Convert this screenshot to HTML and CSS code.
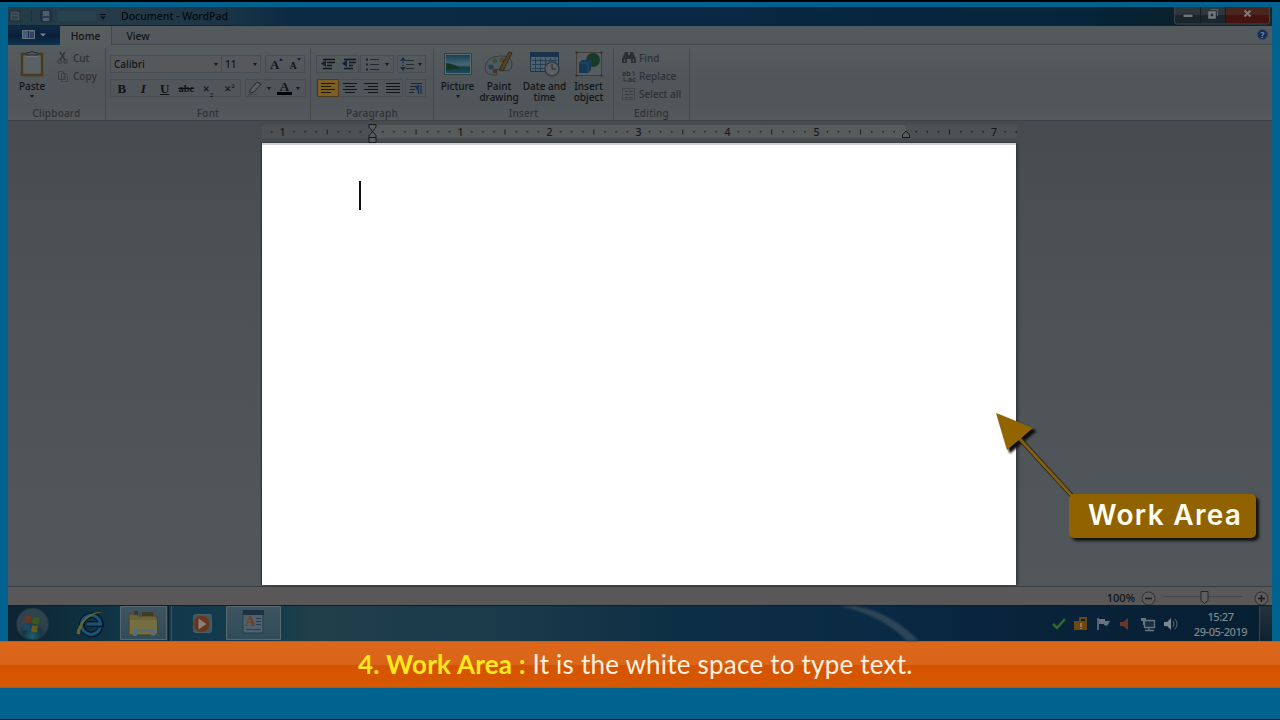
FILE: index.html
```
<!DOCTYPE html>
<html lang="en">
<head>
  <meta charset="UTF-8">
  <title>Document - WordPad</title>
  <link rel="stylesheet" href="styles.css">
</head>
<body>
<div class="window">
  <div class="titlebar">
    <svg class="quick" width="112" height="18" viewBox="8 7 112 18">
      <rect x="10" y="11" width="10" height="10" fill="#43525b" stroke="#1d2b33"/>
      <path d="M12 14h6M12 17h6M12 19h5" stroke="#23333c"/>
      <path d="M31.500 10v12" stroke="#1d303b"/>
      <path d="M41 11h10v10h-10z" fill="#2c3950" stroke="#18263a"/>
      <path d="M43 11h6v5h-6zM43 18h6v3h-6z" fill="#525e68"/>
      <path d="M58 11h38v10h-38z" fill="#344a57" opacity=".4"/>
      <path d="M100 14.500h6" stroke="#0a1016" stroke-width="1"/>
      <path d="M100 16.500h6l-3 3z" fill="#0a1016"/>
    </svg>
    <span class="title">Document - WordPad</span>
    <div class="controls">
      <svg width="97" height="18" viewBox="0 0 97 18">
        <path d="M.5 0v15q0 2 2 2h91q2 0 2-2V0" fill="#1b252c" stroke="#3c464c"/>
        <path d="M1 0h94v8H1z" fill="#2d373d"/>
        <path d="M52 0h43v14q0 2-2 2H52z" fill="#451410"/>
        <path d="M52 0h43v8H52z" fill="#4a241f"/>
        <path d="M26.500 0v16M51.500 0v16" stroke="#121c22"/>
        <path d="M9 7h10v3.500H9z" fill="#70777b" stroke="#1a2329"/>
        <path d="M35.500 5.500h5v5h-5z" fill="none" stroke="#747b7f" stroke-width="2.500"/>
        <path d="M37 2.500h6.500V9" fill="none" stroke="#596268"/>
        <path d="M70.500 3.500l6 6M76.500 3.500l-6 6" stroke="#7f7b79" stroke-width="2"/>
      </svg>
    </div>
  </div>

  <div class="tabs">
    <div class="file-tab">
      <svg width="26" height="10" viewBox="0 0 26 10">
        <path d="M.5.5h12v8h-12z" fill="#465d75" stroke="#66747f"/>
        <path d="M6.500 1v7M8 3h4M8 5h4M8 7h4" stroke="#172b48"/>
        <path d="M18 3.500h6l-3 3z" fill="#75828f"/>
      </svg>
    </div>
    <div class="tab tab-active">Home</div>
    <div class="tab">View</div>
    <div class="help">?</div>
  </div>

  <div class="ribbon">
    <div class="group clipboard">
      <div class="group-body">
        <div class="big paste">
          <svg width="26" height="28" viewBox="0 0 26 28">
            <path d="M3 4h20v21H3z" fill="#5a6063" stroke="#483a1c" stroke-width="2.400"/>
            <path d="M8 5V2.500h3Q13 0 15 2.500h3V5z" fill="#50575b" stroke="#2b3236"/>
            <path d="M6 6.500h14" stroke="#6c7275"/>
          </svg>
          <span>Paste</span><i class="arrow"></i>
        </div>
        <div class="small-list off">
          <div><svg width="14" height="14" viewBox="0 0 14 14"><path d="M4 1l5 8M9 1L4 9" stroke="#303539" fill="none" stroke-width="1.500"/><circle cx="3.500" cy="10.500" r="1.800" stroke="#303539" fill="none"/><circle cx="9.500" cy="10.500" r="1.800" stroke="#303539" fill="none"/></svg>Cut</div>
          <div><svg width="14" height="14" viewBox="0 0 14 14"><path d="M2.500 2.500h4l2 2v6h-6zM5.500 4.500h4l2 2v6h-6z" stroke="#3a4044" fill="#52585b"/><path d="M7 8h3M7 10h3" stroke="#3a4044"/></svg>Copy</div>
        </div>
      </div>
      <div class="group-name">Clipboard</div>
    </div>

    <div class="group font">
      <div class="group-body rows">
        <div class="row">
          <div class="combo family">Calibri<i class="arrow"></i></div>
          <div class="combo size">11<i class="arrow"></i></div>
          <div class="box grow"><b class="serif">A</b><i class="arrow up"></i><b class="serif smaller">A</b><i class="arrow up down"></i></div>
        </div>
        <div class="row">
          <div class="box styles"><b>B</b><b class="italic">I</b><b class="under">U</b><b class="strike">abc</b><b>×<sub>2</sub></b><b>×<sup>2</sup></b></div>
          <div class="box colors">
            <svg width="16" height="16" viewBox="0 0 16 16"><path d="M3 10l7-8 4 2-7 8-4 1z" fill="#5a6063" stroke="#22282c"/><path d="M1 14.500h9" stroke="#3f464a"/></svg>
            <i class="arrow"></i><b class="font-color">A</b><i class="arrow"></i>
          </div>
        </div>
      </div>
      <div class="group-name">Font</div>
    </div>

    <div class="group paragraph">
      <div class="group-body rows">
        <div class="row">
          <div class="box pair">
            <svg width="16" height="14" viewBox="0 0 16 14"><path d="M3 2.500h12M7 5.500h8M7 8.500h5M3 11.500h9" stroke="#11171b" stroke-width="1.500"/><path d="M6 3v7L1 6.500z" fill="#0c2544"/></svg>
            <svg width="16" height="14" viewBox="0 0 16 14"><path d="M3 2.500h12M8 5.500h7M8 8.500h4M3 11.500h9" stroke="#11171b" stroke-width="1.500"/><path d="M6 3v7L1 6.500z" fill="#0c2544"/></svg>
          </div>
          <div class="box list">
            <svg width="15" height="14" viewBox="0 0 15 14"><path d="M5 2.500h9M5 7.500h9M5 12.500h9" stroke="#23292d"/><path d="M1 1.500h2v2H1zM1 6.500h2v2H1zM1 11.500h2v2H1z" fill="#12243d"/></svg>
            <i class="arrow"></i>
          </div>
          <div class="box spacing">
            <svg width="15" height="14" viewBox="0 0 15 14"><path d="M6 3.500h8M6 7.500h8M6 11.500h8" stroke="#23292d"/><path d="M3 0l3 4H0zM3 14l3-4H0zM2 5h2v1H2zM2 8h2v1H2z" fill="#132e4d"/></svg>
            <i class="arrow"></i>
          </div>
        </div>
        <div class="row">
          <div class="box aligns">
            <span class="chosen"><svg width="14" height="12" viewBox="0 0 14 12"><path d="M0 1.500h14M0 4.500h10M0 7.500h14M0 10.500h10" stroke="#20180a"/></svg></span>
            <span><svg width="14" height="12" viewBox="0 0 14 12"><path d="M0 1.500h14M2 4.500h10M0 7.500h14M2 10.500h10" stroke="#101518"/></svg></span>
            <span><svg width="14" height="12" viewBox="0 0 14 12"><path d="M0 1.500h14M4 4.500h10M0 7.500h14M4 10.500h10" stroke="#101518"/></svg></span>
            <span><svg width="14" height="12" viewBox="0 0 14 12"><path d="M0 1.500h14M0 4.500h14M0 7.500h14M0 10.500h14" stroke="#101518"/></svg></span>
          </div>
          <div class="box dialog">
            <svg width="14" height="13" viewBox="0 0 14 13"><path d="M2 1.500h11M1 4.500h6M1 7.500h5M0 10.500h5" stroke="#1c252c"/><path d="M9.500 3v9M12 3v9" stroke="#173253" stroke-width="1.300"/><path d="M10 3v5Q6.500 8 6.500 5.500T10 3z" fill="#173253"/></svg>
          </div>
        </div>
      </div>
      <div class="group-name">Paragraph</div>
    </div>

    <div class="group insert">
      <div class="group-body">
        <div class="big picture">
          <svg width="30" height="28" viewBox="0 0 30 28">
            <defs><linearGradient id="sky" x2="0" y2="1"><stop offset="0" stop-color="#173f5a"/><stop offset=".55" stop-color="#4a6870"/><stop offset=".7" stop-color="#173b3b"/><stop offset="1" stop-color="#1c4a5c"/></linearGradient></defs>
            <path d="M1.500 3.500h27v21h-27z" fill="#5a6a6d" stroke="#2f4246"/>
            <path d="M3 5h24v18H3z" fill="url(#sky)"/>
            <path d="M3 13q9 1 14 5L3 20z" fill="#153322"/>
          </svg>
          <span>Picture</span><i class="arrow"></i>
        </div>
        <div class="big paint">
          <svg width="30" height="28" viewBox="0 0 30 28">
            <path d="M1 18Q2 7 15 6t13 8-9 6-6 5Q2 26 1 18z" fill="#50595c" stroke="#343e41"/>
            <circle cx="7" cy="17" r="2.500" fill="#263e4d"/><circle cx="11" cy="11" r="2.400" fill="#345036"/><circle cx="18" cy="10" r="2.500" fill="#534626"/><circle cx="11" cy="21" r="2.300" fill="#483026"/>
            <path d="M15 20L25 2l3 1-9 18z" fill="#54422b" stroke="#33291b"/>
          </svg>
          <span>Paint<br>drawing</span>
        </div>
        <div class="big date">
          <svg width="32" height="28" viewBox="0 0 32 28">
            <path d="M1.500 2.500h28v19h-28z" fill="#4e606c" stroke="#20323f"/><path d="M1 2h29v5H1z" fill="#1a324a"/>
            <path d="M3 10.500h25M3 14.500h25M3 18.500h25M6.500 8v13M11.500 8v13M16.500 8v13M21.500 8v13M26 8v6" stroke="#263f54"/>
            <circle cx="23" cy="19" r="7" fill="#5a6063" stroke="#343c40" stroke-width="1.500"/><path d="M23 14v5h4" fill="none" stroke="#252c30"/>
          </svg>
          <span>Date and<br>time</span>
        </div>
        <div class="big object">
          <svg width="30" height="28" viewBox="0 0 30 28">
            <path d="M2.500 2.500h25v23h-25z" fill="#565d60" stroke="#453c37"/><circle cx="19" cy="10" r="7" fill="#173b26"/>
            <path d="M5 13l3-3h9v10l-3 3H5z" fill="#173855"/><path d="M5 13h9v10M14 13l3-3" fill="none" stroke="#264a66"/>
            <path d="M1.500 1.500h2v2h-2zM26.500 1.500h2v2h-2zM1.500 24.500h2v2h-2zM26.500 24.500h2v2h-2z" fill="#352923"/>
          </svg>
          <span>Insert<br>object</span>
        </div>
      </div>
      <div class="group-name">Insert</div>
    </div>

    <div class="group editing">
      <div class="group-body">
        <div class="small-list off">
          <div><svg width="14" height="14" viewBox="0 0 14 14"><path d="M3 1h3v3h2V1h3l3 7v4H9V8H5v4H0V8z" fill="#2a3034"/><path d="M2.500 8v3M11.500 8v3" stroke="#505659"/></svg>Find</div>
          <div><svg width="14" height="14" viewBox="0 0 14 14"><text x="0" y="7" class="ab">ab</text><text x="6" y="13" class="ab">ac</text><path d="M2 8v4h3M10 3h2v4" stroke="#2d3337" fill="none"/></svg>Replace</div>
          <div><svg width="14" height="14" viewBox="0 0 14 14"><path d="M.5 1.500h12v11h-12z" fill="none" stroke="#30363a" stroke-dasharray="1 1"/><path d="M3 4.500h3M7 4.500h4M3 7.500h5M9 7.500h2M3 10.500h3M7 10.500h4" stroke="#353b3f"/></svg>Select all</div>
        </div>
      </div>
      <div class="group-name">Editing</div>
    </div>
  </div>

  <div class="workspace">
    <svg class="ruler" width="755" height="22" viewBox="262 121 755 22">
      <defs>
        <pattern id="inch" x="371.600" y="125" width="88.900" height="14" patternUnits="userSpaceOnUse">
          <path d="M10.600 6h1.400v1.400h-1.400zM21.700 6h1.400v1.400h-1.400zM32.800 6h1.400v1.400h-1.400zM44 4.500h1v5h-1zM55 6h1.400v1.400H55zM66.100 6h1.400v1.400h-1.400zM77.200 6h1.400v1.400h-1.400z" fill="#171b1d"/>
        </pattern>
      </defs>
      <path d="M262 125h755v13H262z" fill="#4c5154"/>
      <path d="M373 125h533v13H373z" fill="#575b5c"/>
      <path d="M262 125h755v14H262z" fill="url(#inch)"/>
      <g class="numbers"><text x="282.500" y="136">1</text><text x="460.500" y="136">1</text><text x="549.500" y="136">2</text><text x="638.500" y="136">3</text><text x="727.500" y="136">4</text><text x="816.500" y="136">5</text><text x="994" y="136">7</text></g>
      <path d="M369 124.500h7v2.500l-3.500 4.500-3.500-4.500zM372.500 131.500l3.500 4v7h-7v-7zM369 137.500h7M902.500 137.500v-2.500l3.500-4 3.500 4v2.500z" fill="#585d60" stroke="#15191c"/>
    </svg>
    <div class="page"><div class="caret"></div></div>
  </div>

  <div class="status">
    <span>100%</span>
    <svg width="134" height="18" viewBox="1138 588 134 18">
      <g fill="#5d5c5c" stroke="#303030"><circle cx="1148.500" cy="598.500" r="6.500"/><circle cx="1261.500" cy="598.500" r="6.500"/></g>
      <path d="M1145 598.500h7M1258 598.500h7M1261.500 595v7" stroke="#1a1a1a" stroke-width="1.500"/>
      <path d="M1164 596.500h79" stroke="#474646"/>
      <path d="M1201 591.500h7v9l-3.500 3-3.500-3z" fill="#5e5e5e" stroke="#262626"/>
    </svg>
  </div>

  <div class="taskbar">
    <svg width="280" height="35" viewBox="8 606 280 35">
      <defs>
        <radialGradient id="orb" cy=".9"><stop offset="0" stop-color="#1f5f6c"/><stop offset=".6" stop-color="#183643"/><stop offset="1" stop-color="#30434d"/></radialGradient>
        <linearGradient id="task" x2="0" y2="1"><stop offset="0" stop-color="#3f5561"/><stop offset="1" stop-color="#304c59"/></linearGradient>
      </defs>
      <circle cx="32.500" cy="624" r="16" fill="url(#orb)" stroke="#1f343f"/>
      <path d="M25 617q4-2 7 0l-1 6q-3-2-7 0z" fill="#6b341b"/><path d="M33 617q4 2 7 0l-2 7q-3 1-6-1z" fill="#3b591c"/>
      <path d="M24 625q4-2 7 0l-1 6q-3-2-7 0z" fill="#1c4866"/><path d="M32 625q3 2 6 0l-1 7q-3 1-6-1z" fill="#6b5a19"/>
      <path d="M100.500 628a9.500 9.500 0 1 1 .5-4H87" fill="none" stroke="#061a2c" stroke-width="6"/>
      <path d="M100 628a9.500 9.500 0 1 1 .5-4H87" fill="none" stroke="#1a5577" stroke-width="3"/>
      <path d="M80 634q-6 2-1-8 8-15 24-14-14 2-20 12-3 6-3 10z" fill="#65632e"/>
      <path d="M120.500 606.500h46v33h-46z" fill="url(#task)" stroke="#56666f"/><path d="M168.500 606v35" stroke="#101f27"/><path d="M171.500 606v35" stroke="#3d5663"/>
      <path d="M129 614h7l2 2h19v19h-28z" fill="#6b6238" stroke="#4a4528"/><path d="M130 620h27v14h-27z" fill="#756e42"/><path d="M133 636v-7h22v7l-4-1v-3h-14v4z" fill="#536e79"/><path d="M134 611h4v4h-4zM142 612h11v4h-11z" fill="#3c3c26"/>
      <rect x="193.500" y="614.500" width="18" height="18" rx="2" fill="#43555f" stroke="#4e5e66"/><circle cx="201.500" cy="624" r="8" fill="#69351c"/><path d="M198.500 618.500v11l8-5.500z" fill="#87837c"/>
      <path d="M226.500 606.500h54v33h-54z" fill="url(#task)" stroke="#58686f"/>
      <path d="M243 611h20v22h-20z" fill="#50626e" stroke="#253c50"/><path d="M243 610h21v5h-21z" fill="#1d3145"/><path d="M256 618.500h5M256 621.500h5M256 624.500h5M246 629.500h15" stroke="#263d51"/>
      <text x="245" y="626" class="wp">A</text>
    </svg>
    <svg class="streak" width="120" height="35" viewBox="820 606 120 35"><path d="M840 606q43 10 67 35h12q-27-28-63-35z"/></svg>
    <div class="tray">
      <svg width="130" height="20" viewBox="1050 614 130 20">
        <path d="M1053 624l4 4 8-9" fill="none" stroke="#2c6b2f" stroke-width="2.500"/>
        <path d="M1074 621h13v9h-13z" fill="#70480f"/><path d="M1080 621v-3h6v4" fill="none" stroke="#664519" stroke-width="2"/><path d="M1080 623h2v4h-2zM1080 628h2v1h-2z" fill="#8f7a54"/>
        <path d="M1098 618v12" stroke="#707a80" stroke-width="1.500"/><path d="M1099 619h6v2h5l-3 5-3-1v-1h-5z" fill="#67747d"/>
        <path d="M1120 622h3l5-4v12l-5-4h-3z" fill="#6b3527"/>
        <path d="M1144.500 620.500h10v7h-10zM1149 628v2M1145 630.500h9M1143.500 619v6" fill="#182e41" stroke="#67747d" stroke-width="1.300"/><path d="M1141 618h5v3h-5z" fill="#67747d"/>
        <path d="M1164 622h3l4-4v12l-4-4h-3z" fill="#7b868d"/><path d="M1173 621q2 3 0 6M1175 619q4 5 0 10" fill="none" stroke="#5b6a74"/>
      </svg>
      <div class="clock">15:27<br>29-05-2019</div>
      <div class="show-desktop"></div>
    </div>
  </div>
</div>

<div class="caption"><p><b>4. Work Area :</b> <span>It is the white space to type text.</span></p></div>

<div class="callout">
  <svg width="90" height="95" viewBox="990 408 90 95">
    <defs><filter id="soft" x="-20%" y="-20%" width="150%" height="150%"><feGaussianBlur stdDeviation="1"/></filter></defs>
    <path d="M999 416l37 15-26 22zM1020 438l54 59" stroke="#111" stroke-width="1" fill="#111" filter="url(#soft)"/>
    <path d="M1018 437l54 59" stroke="#2c2815" stroke-width="4.500"/>
    <path d="M1018 437l54 59" stroke="#806013" stroke-width="2.600"/>
    <path d="M996 413l37 15-26 22z" fill="#916400"/>
  </svg>
  <div class="callout-label">Work Area</div>
</div>
</body>
</html>
```
FILE: styles.css
```
* {
  box-sizing: border-box;
}
body {
  margin: 0;
  width: 1280px;
  height: 720px;
  overflow: hidden;
  background: #00638f;
  border-top: 2px solid #000;
  border-bottom: 1px solid #001a26;
  font-family: "Noto Sans", "Open Sans", sans-serif;
  font-size: 10px;
  font-weight: 500;
  color: #101416;
  position: relative;
}
svg {
  display: block;
  flex: none;
}
.window {
  margin: 5px 8px 0;
  height: 634px;
  display: flex;
  flex-direction: column;
}
.titlebar {
  height: 19px;
  display: flex;
  background: linear-gradient(90deg, #243b48, #253b49 8%, #1b3546 17%, #0c2b43 22%, #082843 55%, #04253b 85%, #0a202d 92%, #17242b);
  border-bottom: 1px solid #14232d;
}
.title {
  padding-left: 1px;
  line-height: 18px;
  font-size: 10.5px;
  color: #04090d;
}
.controls {
  margin-left: auto;
  padding-right: 1px;
}
.tabs {
  height: 19px;
  display: flex;
  background: #54595d;
  border-bottom: 1px solid #43484c;
}
.file-tab {
  width: 52px;
  height: 19px;
  padding: 4px 0 0 14px;
  background: linear-gradient(#0f2a45, #0a1f3a 50%, #10334e);
}
.tab {
  width: 52px;
  height: 19px;
  line-height: 20px;
  text-align: center;
  font-size: 10.3px;
}
.tab-active {
  background: #585d5f;
  border-right: 1px solid #43484c;
}
.help {
  width: 11px;
  height: 11px;
  margin: 3px 4px 0 auto;
  border-radius: 50%;
  background: #142c58;
  border: 1px solid #31486b;
  color: #7d8ba0;
  font-size: 9px;
  font-weight: bold;
  line-height: 9px;
  text-align: center;
}
.ribbon {
  height: 76px;
  display: flex;
  background: linear-gradient(#575c5d, #50565a 45%, #50565a 80%, #55595b);
  border-bottom: 1px solid #3d4246;
}
.group {
  height: 72px;
  margin-top: 3px;
  display: flex;
  flex-direction: column;
  border-right: 1px solid #454a4d;
}
.clipboard {
  width: 98px;
}
.font {
  width: 205px;
}
.paragraph {
  width: 123px;
}
.insert {
  width: 180px;
}
.editing {
  width: 76px;
}
.group-body {
  height: 58px;
  display: flex;
}
.group-name {
  text-align: center;
  line-height: 14px;
  color: #2d3236;
  letter-spacing: 0.2px;
}
.big {
  display: flex;
  flex-direction: column;
  align-items: center;
  text-align: center;
  line-height: 11px;
  white-space: nowrap;
}
.big span {
  margin-top: 3px;
}
.paste {
  width: 48px;
  padding-top: 2px;
}
.picture {
  width: 45px;
}
.paint {
  width: 38px;
}
.date {
  width: 53px;
}
.object {
  width: 35px;
}
.insert .group-body {
  padding: 2px 0 0 1px;
}
.arrow {
  width: 0;
  height: 0;
  border: 2.5px solid transparent;
  border-top: 3px solid #15191b;
  border-bottom: 0;
}
.big .arrow {
  margin-top: 3px;
}
.small-list {
  display: flex;
  flex-direction: column;
  gap: 4px;
  line-height: 14px;
  white-space: nowrap;
}
.small-list > div {
  display: flex;
  gap: 3px;
}
.clipboard .small-list {
  padding-top: 3px;
}
.editing .small-list {
  padding: 3px 0 0 8px;
}
.off {
  color: #2c3135;
}
.ab {
  font-size: 7px;
  font-weight: bold;
  fill: #2c3135;
}
.rows {
  flex-direction: column;
  gap: 6px;
  padding-top: 7px;
}
.row {
  display: flex;
  height: 18px;
}
.combo,
.box {
  height: 18px;
  display: flex;
  align-items: center;
  border: 1px solid #474d51;
}
.combo {
  background: #55595b;
  padding: 0 3px 0 3px;
}
.combo .arrow {
  margin-left: auto;
}
.font .rows {
  padding-left: 4px;
}
.family {
  width: 112px;
}
.size {
  width: 39px;
  border-left: 0;
}
.grow {
  width: 40px;
  margin-left: 4px;
  padding-left: 4px;
}
.serif,
.box b {
  font-family: "Liberation Serif", serif;
  font-size: 13px;
  line-height: 15px;
}
.box .smaller {
  font-size: 10px;
  margin: 3px 0 0 6px;
}
.grow .up {
  border-top: 0;
  border-bottom: 3px solid #12233d;
  margin-bottom: 9px;
}
.grow .down {
  border-top: 3px solid #12233d;
  border-bottom: 0;
}
.styles {
  width: 131px;
}
.styles b {
  width: 21.7px;
  text-align: center;
}
.styles sub,
.styles sup {
  font-size: 6px;
  line-height: 0;
}
.italic {
  font-style: italic;
}
.under {
  text-decoration: underline;
}
.box .strike {
  font-size: 10.5px;
  text-decoration: line-through;
}
.colors {
  width: 61px;
  margin-left: 4px;
  padding-left: 1px;
  gap: 4px;
}
.box .font-color {
  width: 15px;
  height: 14px;
  line-height: 12px;
  text-align: center;
  margin-left: 2px;
  border-bottom: 3px solid #020405;
}
.paragraph .rows {
  padding-left: 5px;
}
.pair {
  width: 43px;
  gap: 5px;
  padding-left: 3px;
}
.list {
  width: 34px;
  margin-left: 1px;
  padding-left: 4px;
  gap: 5px;
}
.spacing {
  width: 29px;
  margin-left: 3px;
  padding-left: 2px;
  gap: 3px;
}
.aligns {
  width: 87px;
}
.aligns span {
  width: 21.5px;
  height: 18px;
  padding: 3px 4px;
}
.aligns .chosen {
  background: #7c5f22;
  border: 1px solid #4c3c1c;
  padding: 2px 3px;
}
.dialog {
  width: 21px;
  margin-left: 2px;
  padding-left: 3px;
}
.workspace {
  height: 466px;
  padding-left: 254px;
  background: linear-gradient(#464b50, #4c5155 30%, #52575b);
  border-bottom: 1px solid #383d40;
}
.numbers {
  font-size: 10.5px;
  text-anchor: middle;
  fill: #15191b;
}
.page {
  width: 754px;
  height: 442px;
  padding: 36px 0 0 96.5px;
  background: #fff;
  border-top: 2px solid #cdd0dc;
  box-shadow: 2px 0 3px #32373b, -1px 0 1px #30363a;
}
.caret {
  width: 2px;
  height: 29px;
  background: #111;
}
.status {
  height: 18px;
  display: flex;
  justify-content: flex-end;
  gap: 3px;
  background: #595757;
  font-size: 11px;
  line-height: 21px;
}
.status svg {
  margin-top: 1px;
}
.taskbar {
  height: 36px;
  display: flex;
  background: linear-gradient(90deg, #0d2432, #11384a 10%, #133c4e 21%, #213e4a 24%, #193a4a 40%, #0d2f44 53%, #0a2a45 68%, #09233b 80%, #071f32);
  border-top: 1px solid #111d24;
}
.streak {
  margin-left: 532px;
  fill: #2d4558;
  filter: blur(1px);
}
.wp {
  font: bold 15px "Liberation Serif", serif;
  fill: #6e4128;
}
.tray {
  flex: 1;
  display: flex;
  justify-content: flex-end;
  color: #7d888f;
}
.tray svg {
  margin-top: 8px;
}
.clock {
  width: 79px;
  padding-top: 3px;
  padding-left: 2px;
  text-align: center;
  font-size: 11px;
  line-height: 15px;
  letter-spacing: -0.4px;
}
.show-desktop {
  width: 13px;
  border-left: 1px solid #34454e;
  background: linear-gradient(#24343c, #0c2230);
}
.caption {
  height: 47px;
  background: linear-gradient(#dc6619, #da6418 49%, #d45300 51%, #d75800 96%, #8c6728);
  border-top: 1px solid #a8653b;
}
.caption p {
  margin: 0;
  padding-left: 358px;
  font: 26px/44px Lato, sans-serif;
  letter-spacing: 0.22px;
  white-space: nowrap;
  color: #fff1df;
}
.caption b {
  color: #ffe81c;
}
.callout {
  position: absolute;
  left: 990px;
  top: 406px;
}
.callout-label {
  position: absolute;
  left: 79px;
  top: 86px;
  width: 187px;
  height: 44px;
  padding-left: 19px;
  border-radius: 5px;
  background: #916300;
  box-shadow: 3px 3px 3px #111;
  color: #fffdf2;
  font: 600 28px/43px Inter, sans-serif;
  letter-spacing: 1.3px;
  white-space: nowrap;
}
```
